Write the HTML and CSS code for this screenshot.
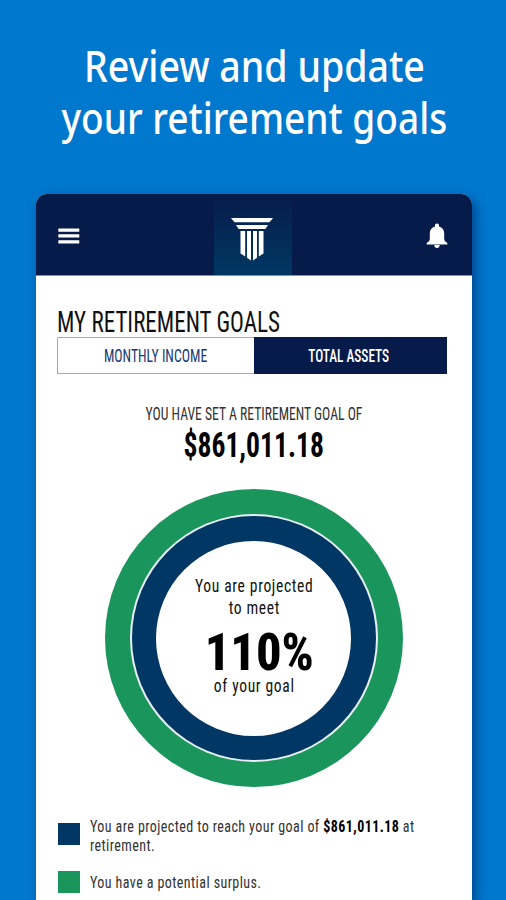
FILE: index.html
```html
<!DOCTYPE html>
<html lang="en">
<head>
    <meta charset="UTF-8">
    <meta name="viewport" content="width=device-width, initial-scale=1.0">
    <title>My Retirement Goals</title>
    <link rel="stylesheet" href="styles.css">
</head>
<body>
    <h1 class="headline">
        <span class="headline-line">Review and update</span>
        <span class="headline-line second">your retirement goals</span>
    </h1>

    <div class="phone">
        <header class="topbar">
            <svg class="menu-icon" width="22" height="16" viewBox="0 0 22 16" fill="#fff">
                <rect x="0.3" y="0.5" width="21" height="3.2" rx="0.5"/>
                <rect x="0.3" y="6.2" width="21" height="3.2" rx="0.5"/>
                <rect x="0.3" y="12.2" width="21" height="3.2" rx="0.5"/>
            </svg>
            <div class="logo">
                <svg width="42" height="43" viewBox="0 0 42 43" fill="#fff">
                    <path d="M0 0h42l-3.5 4.2h-35z"/>
                    <path d="M5 7h32l-2.6 4H7.6z"/>
                    <path d="M9.5 13h4.7v25.4l-4.7-3z"/>
                    <path d="M16 13h4v29.4l-4-2.6z"/>
                    <path d="M22 13h4v26.8l-4 2.6z"/>
                    <path d="M27.8 13h4.7v22.4l-4.7 3z"/>
                </svg>
            </div>
            <svg class="bell-icon" width="22" height="26" viewBox="0 0 22 26" fill="#fff">
                <path d="M11 0.5c1.3 0 2 .9 2 2v.9c3.4.8 5.2 3.5 5.2 7.1v5.5c0 1.600 1 2.500 2.300 3.300.6.4.9.9.9 1.500v.6H.6v-.6c0-.6.3-1.100.9-1.500 1.300-.8 2.300-1.700 2.300-3.300v-5.500c0-3.600 1.800-6.300 5.200-7.100v-.9c0-1.100.7-2 2-2z"/>
                <path d="M8.3 22h5.4c0 1.900-1.100 3-2.700 3s-2.700-1.100-2.700-3z"/>
            </svg>
        </header>

        <main class="content">
            <h2 class="title"><span>MY RETIREMENT GOALS</span></h2>

            <div class="tabs">
                <div class="tab"><span>MONTHLY INCOME</span></div>
                <div class="tab active"><span>TOTAL ASSETS</span></div>
            </div>

            <p class="goal-label"><span>YOU HAVE SET A RETIREMENT GOAL OF</span></p>
            <p class="goal-amount"><span>$861,011.18</span></p>

            <div class="ring">
                <div class="ring-gap">
                    <div class="ring-navy">
                        <div class="ring-center">
                            <p class="ring-text"><span>You are projected</span></p>
                            <p class="ring-text"><span>to meet</span></p>
                            <p class="ring-percent"><span>110%</span></p>
                            <p class="ring-text last"><span>of your goal</span></p>
                        </div>
                    </div>
                </div>
            </div>

            <div class="legend">
                <div class="swatch navy"></div>
                <p class="legend-text">You are projected to reach your goal of <b>$861,011.18</b> at<br>retirement.</p>
            </div>
            <div class="legend">
                <div class="swatch green"></div>
                <p class="legend-text">You have a potential surplus.</p>
            </div>
        </main>
    </div>
</body>
</html>
```
FILE: styles.css
```css
* {
    box-sizing: border-box;
}
body {
    margin: 0;
    padding-top: 39px;
    height: 900px;
    overflow: hidden;
    background-color: #0078ce;
    font-family: Roboto, sans-serif;
    font-stretch: 75%;
    color: #111;
}
p, h1, h2 {
    margin: 0;
    font-weight: 400;
    white-space: nowrap;
}
/* narrow the letters */
p span, h2 span, .tab span {
    display: inline-block;
}
.headline {
    display: flex;
    flex-direction: column;
    align-items: center;
    font-family: "Noto Sans", sans-serif;
    font-stretch: normal;
    font-size: 43.5px;
    font-weight: 500;
    line-height: 52px;
    color: #fff;
}
.headline-line {
    transform: translateX(1px) scaleX(0.863);
}
.headline-line.second {
    transform: translateX(1px) scaleX(0.852);
}
.phone {
    width: 436px;
    height: 706px;
    margin: 51px 0 0 35.5px;
    border-radius: 11px 11px 0 0;
    background-color: #fff;
    box-shadow: 4px 5px 12px rgba(0, 35, 95, 0.6);
}
.topbar {
    display: flex;
    justify-content: space-between;
    align-items: center;
    height: 82px;
    padding: 0 24px 0 22px;
    border-radius: 11px 11px 0 0;
    border-bottom: 1px solid #8b90a5;
    background-color: #061b4a;
}
.menu-icon {
    margin-top: 3px;
}
.bell-icon {
    margin-top: 3px;
}
.logo {
    width: 78px;
    height: 81px;
    padding: 24px 17.5px 0;
    background: linear-gradient(#061b4a, #003863);
}
.content {
    padding: 33px 24.5px 0 21.5px;
}
.title {
    font-size: 30px;
    line-height: 26px;
}
.title span {
    transform: scaleX(0.768);
    transform-origin: left;
}
.tabs {
    display: flex;
    height: 37px;
    margin-top: 2px;
    border: 1px solid #aaa;
}
.tab {
    width: 196px;
    text-align: center;
    font-size: 18px;
    line-height: 35px;
    color: #1b3a78;
}
.tab span {
    transform: scaleX(0.765);
}
.tab.active {
    flex: 1;
    margin: -1px -1px -1px 0;
    padding-right: 3px;
    line-height: 37px;
    background-color: #061b4a;
    color: #fff;
    font-weight: 500;
}
.tab.active span {
    transform: scaleX(0.74);
}
.goal-label {
    margin: 29px 0 0 3px;
    text-align: center;
    font-size: 17.5px;
    line-height: 22px;
    color: #333;
}
.goal-label span {
    transform: scaleX(0.78);
}
.goal-amount {
    margin: 0 0 0 3px;
    text-align: center;
    font-size: 34.5px;
    font-weight: 700;
    line-height: 40px;
    color: #000;
}
.goal-amount span {
    transform: scaleX(0.8);
}
.ring {
    width: 298px;
    height: 298px;
    margin: 24px 0 0 47.5px;
    padding: 25px;
    border-radius: 50%;
    background-color: #1a965d;
}
.ring-gap {
    height: 248px;
    padding: 2px;
    border-radius: 50%;
    background-color: #e8eef2;
}
.ring-navy {
    height: 244px;
    padding: 24.5px;
    border-radius: 50%;
    background-color: #003764;
}
.ring-center {
    height: 195px;
    padding: 34px 0 0 1px;
    border-radius: 50%;
    background-color: #fff;
    text-align: center;
}
.ring-text {
    font-size: 19px;
    line-height: 22px;
    letter-spacing: 0.8px;
}
.ring-text span {
    transform: scaleX(0.82);
}
.ring-text.last {
    line-height: 19px;
}
.ring-percent {
    margin: 11px 0 0 10px;
    font-size: 52px;
    font-weight: 800;
    line-height: 46px;
    color: #000;
}
.ring-percent span {
    transform: scaleX(0.97);
}
.legend {
    display: flex;
    align-items: center;
    margin-top: 15.5px;
}
.ring + .legend {
    margin-top: 29.5px;
}
.swatch {
    flex: none;
    width: 22px;
    height: 22px;
    margin: 0 10px 0 1px;
}
.swatch.navy {
    margin-bottom: 4px;
    background-color: #003764;
}
.swatch.green {
    background-color: #1a965d;
}
.legend-text {
    font-size: 17px;
    line-height: 19.5px;
    letter-spacing: 0.5px;
    color: #333;
    transform: scaleX(0.825);
    transform-origin: left;
}
.swatch.green + .legend-text {
    padding-top: 2px;
}
.legend-text b {
    color: #000;
}
```
